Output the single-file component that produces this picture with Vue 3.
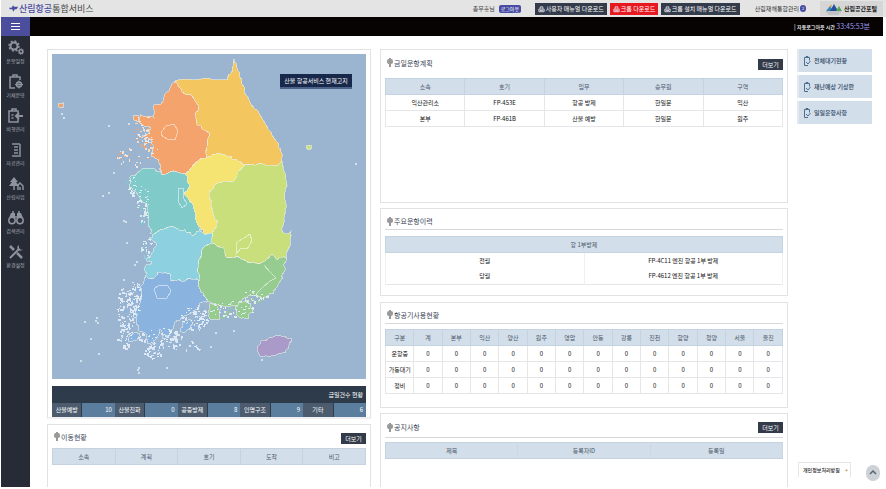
<script setup>
const menus = [
  { label: '운항일정', icon: 'gears' },
  { label: '기체운영', icon: 'clipboard' },
  { label: '비행관리', icon: 'export' },
  { label: '자료관리', icon: 'server' },
  { label: '산림사업', icon: 'tree' },
  { label: '검색관리', icon: 'binoculars' },
  { label: '환경설정', icon: 'tools' },
]

const downloads = [
  { label: '사용자 매뉴얼 다운로드', kind: 'wide' },
  { label: '크롬 다운로드', kind: 'red' },
  { label: '크롬 설치 매뉴얼 다운로드', kind: 'wider' },
]

const stats = [
  { label: '산불예방', value: 10 },
  { label: '산불진화', value: 0 },
  { label: '공중방제', value: 8 },
  { label: '인명구조', value: 9 },
  { label: '기타', value: 6 },
]

const moveCols = ['소속', '계획', '호기', '도착', '비고']
const planCols = ['소속', '호기', '임무', '승무원', '구역']
const plans = [
  ['익산관리소', 'FP-453E', '항공 방제', '한일문', '익산'],
  ['본부', 'FP-461B', '산불 예방', '한일문', '원주'],
]
const history = [
  ['전월', 'FP-4C11 엔진 항공 1부 방제'],
  ['당월', 'FP-4612 엔진 항공 1부 방제'],
]
const craftCols = ['구분', '계', '본부', '익산', '양산', '원주', '영암', '안동', '강릉', '진천', '함양', '청양', '서울', '울진']
const craftRows = ['운항중', '가동대기', '정비']
const noticeCols = ['제목', '등록자ID', '등록일']
const quick = ['전체대기현황', '재난예상 기상판', '일일운항사항']

// Repeatable pseudo-random value in 0..1
function hash(a, b) {
  const v = Math.sin(a * 12.9898 + b * 78.233) * 43758.5453
  return v - Math.floor(v)
}

// Splits each edge and nudges the middle points; an edge that two regions share gets the same points
function coast(text) {
  let out = text.split(' ').map((p) => p.split(',').map(Number))
  for (let pass = 0; pass < 2; pass++) {
    const next = []
    out.forEach((p, i) => {
      const q = out[(i + 1) % out.length]
      const len = Math.hypot(q[0] - p[0], q[1] - p[1])
      next.push(p)
      if (len > 4) {
        const s = p[0] + q[0]
        const t = p[1] + q[1]
        next.push([s / 2 + (hash(s, t) - 0.5) * 3, t / 2 + (hash(t, s) - 0.5) * 3])
      }
    })
    out = next
  }
  return out.map((p) => p.map((n) => n.toFixed(1)).join(',')).join(' ')
}

const regions = [
  { name: 'gangwon', fill: '#f4c65f', pts: '173,82 177,80 200,79 226,80 229,74 231,68 233,59 236,68 241,80 243,92 250,104 262,120 267,129 275,141 280,152 281,161 276,166 262,164 244,165 238,162 230,156 224,155 215,154 205,158 206,147 208,133 196,125 194,113 198,106 190,95 184,94 177,86' },
  { name: 'gyeonggi', fill: '#f4a36c', pts: '173,82 166,92 160,104 153,105 153,118 146,116 139,115 138,121 144,127 150,128 148,133 140,138 149,139 153,146 150,153 153,157 158,163 161,175 176,172 184,174 198,160 205,158 206,147 208,133 196,125 194,113 198,106 190,95 184,94 177,86' },
  { name: 'chungnam', fill: '#80cbc9', pts: '142,168 150,168 161,175 176,172 184,174 188,184 183,193 191,203 194,212 197,225 198,231 192,236 184,230 168,227 152,235 147,225 146,205 140,200 135,192 128,186 130,176' },
  { name: 'chungbuk', fill: '#f5e471', pts: '184,174 198,160 205,158 215,154 224,155 230,156 238,162 244,165 238,171 233,181 226,181 213,186 208,196 210,205 212,213 217,221 211,233 202,233 197,225 194,212 191,203 183,193 188,184' },
  { name: 'gyeongbuk', fill: '#c9df7c', pts: '244,165 262,164 276,166 281,161 285,180 284,200 283,218 282,232 284,234 290,231 289,243 285,258 275,259 270,255 262,262 250,263 240,259 226,258 222,248 211,243 211,233 217,221 212,213 210,205 208,196 213,186 226,181 233,181 238,171' },
  { name: 'jeonbuk', fill: '#8dd1e1', pts: '152,235 168,227 184,230 192,236 198,231 202,233 211,233 211,243 202,248 198,260 198,281 190,279 184,281 170,281 169,274 160,272 152,279 145,276 145,265 151,262 145,259 152,252 155,243 148,238' },
  { name: 'jeonnam', fill: '#8bb3df', pts: '145,276 152,279 160,272 169,274 170,281 184,281 190,279 198,281 202,293 206,302 198,305 192,313 181,317 174,322 169,333 165,338 161,336 159,329 156,338 151,346 146,343 146,335 138,331 135,324 136,308 140,300 139,288' },
  { name: 'gyeongnam', fill: '#97cc90', pts: '202,248 211,243 222,248 226,258 240,259 250,263 262,262 270,255 275,259 285,258 283,272 278,283 272,294 262,299 250,295 243,298 240,305 228,307 215,304 206,302 202,293 198,281 198,260' },
  { name: 'namhae', fill: '#97cc90', pts: '208,304 216,306 219,312 218,320 209,319 207,312' },
  { name: 'geoje', fill: '#97cc90', pts: '234,307 242,302 250,304 251,312 245,319 236,315' },
  { name: 'goheung', fill: '#8bb3df', pts: '181,324 187,320 191,322 190,328 184,332 179,330' },
  { name: 'jindo', fill: '#8bb3df', pts: '127,338 134,332 139,334 136,340 128,342' },
  { name: 'jeju', fill: '#a99aca', pts: '256,350 259,343 268,338 280,336 290,338 288,345 281,353 270,356 259,356' },
  { name: 'ulleung', fill: '#c9df7c', pts: '306,145 310,145 311,148 308,150 305,148' },
  { name: 'baengnyeong', fill: '#f4a36c', pts: '57,104 62,103 62,107 58,107' },
  { name: 'ganghwa', fill: '#f4a36c', pts: '132,116 137,115 138,122 133,120' },
].map((r) => ({ ...r, pts: r.pts.split(' ').length < 6 ? r.pts : coast(r.pts) }))

const lines = [
  '161,131 165,126 173,124 177,131 174,140 166,139 160,135',
  '177,188 182,188 182,197 186,204 181,208 177,201',
  '153,289 158,285 167,286 170,291 166,298 156,298',
  '236,242 243,238 249,234 251,241 246,249 240,248 235,254',
]

// Islet clusters: centre, spread, number of islets, light colour, land colour
const clusters = [
  [125, 308, 10, 22, 110, '#dbe7f5', '#8bb3df'],
  [134, 298, 7, 18, 90, '#dbe7f5', '#8bb3df'],
  [124, 336, 8, 14, 60, '#dbe7f5', '#8bb3df'],
  [159, 338, 22, 10, 130, '#dbe7f5', '#8bb3df'],
  [193, 317, 14, 14, 130, '#dbe7f5', '#8bb3df'],
  [150, 353, 9, 7, 34, '#dbe7f5', '#8bb3df'],
  [230, 309, 22, 10, 90, '#e0f0df', '#97cc90'],
  [252, 296, 14, 6, 55, '#e0f0df', '#97cc90'],
  [142, 203, 6, 20, 60, '#d6eef0', '#80cbc9'],
  [131, 183, 6, 12, 36, '#d6eef0', '#80cbc9'],
  [142, 129, 10, 15, 46, '#f8d9c4', '#f4a36c'],
  [150, 146, 7, 15, 30, '#f8d9c4', '#f4a36c'],
  [128, 158, 13, 10, 24, '#f8e3d6', '#f4a36c'],
  [146, 248, 6, 12, 24, '#d6eef0', '#8dd1e1'],
  [185, 349, 14, 10, 18, '#dbe7f5', '#8bb3df'],
]
const islets = clusters.flatMap(([cx, cy, rx, ry, n, light, base], c) =>
  Array.from({ length: n }, (_, i) => {
    const a = hash(i + 1, c + 3) * 6.283
    const r = Math.sqrt(hash(c + 7, i + 2))
    return {
      x: Math.round(cx + Math.cos(a) * r * rx),
      y: Math.round(cy + Math.sin(a) * r * ry),
      w: 1 + Math.floor(hash(i, c) * 2.3),
      h: 1 + Math.floor(hash(c, i) * 2.3),
      fill: hash(i + 5, c + 9) > 0.4 ? light : base,
    }
  }),
)
const singles = [[60, 113], [62, 117], [107, 125], [127, 123], [112, 172], [101, 195], [107, 192], [124, 221], [122, 220], [125, 242], [135, 261], [133, 264], [140, 247], [122, 279], [83, 321], [95, 317], [94, 320], [96, 322], [89, 338], [79, 360], [97, 353], [137, 367], [136, 369], [137, 372], [165, 367], [354, 163], [214, 332], [209, 346], [232, 330], [260, 359]]
</script>

<template>
  <div class="page">
    <header class="top">
      <h1 class="brand">
        <svg viewBox="0 0 12 10" aria-hidden="true"><path d="M0 4h3l2-3 1 2h5l-2 3H7L5 9 4 6H1z" fill="#4b4b9f" /></svg>
        <span><b>산림항공</b>통합서비스</span>
      </h1>
      <div class="user"><span>총무홍님</span><button class="logout">로그아웃</button></div>
      <div class="downloads">
        <a v-for="d in downloads" :key="d.label" href="#" :class="['dl', d.kind]">
          <svg viewBox="0 0 8 8" aria-hidden="true"><path d="M2.500 3V1h3v2M1 3.500h6v3H1zM2 5h4" fill="none" stroke="#e8e8ee" /></svg>{{ d.label }}
        </a>
      </div>
      <a href="#" class="fire">산림재해통합관리<i>2</i></a>
      <a href="#" class="portal">
        <svg viewBox="0 0 18 12" aria-hidden="true">
          <path d="M1 8l4-5 3 5z" fill="#3189b8" /><path d="M5 8l4-7 4 7z" fill="#284f9b" /><path d="M11 8l3-5 3 5z" fill="#55a85a" /><path d="M1 9h15M3 11h11" stroke="#a9adb5" /><circle cx="6" cy="3" r="1" fill="#e39a42" />
        </svg>산림공간포털
      </a>
    </header>

    <div class="bar">
      <button class="burger" aria-label="메뉴"><i /><i /><i /></button>
      <p class="timer">| <b>자동로그아웃 시간</b> <em>33:45:53분</em></p>
    </div>

    <div class="body">
      <nav class="side">
        <a v-for="m in menus" :key="m.label" href="#">
          <svg viewBox="0 0 16 16" fill="none" stroke="#8f939f" stroke-width="1.500" aria-hidden="true">
            <template v-if="m.icon === 'gears'">
              <circle cx="6" cy="6" r="3.500" stroke-width="2" /><circle cx="6" cy="6" r="5" stroke-dasharray="2 1.900" /><circle cx="13" cy="11.500" r="1.800" /><circle cx="13" cy="11.500" r="2.900" stroke-width="1" stroke-dasharray="1 1.200" />
            </template>
            <template v-else-if="m.icon === 'clipboard'">
              <path d="M7 14H2V3h10v3M5 3V1h4v2" /><circle cx="11" cy="10.500" r="2.500" /><path d="M11 6.500v8M7 10.500h8" stroke-width="1" />
            </template>
            <template v-else-if="m.icon === 'export'">
              <path d="M10 11v3H1V3h9v2M4 3V1h4v2M3.500 7h2M3.500 10h2" /><path d="M15 8H8M11 5L8 8l3 3" stroke-width="2" />
            </template>
            <template v-else-if="m.icon === 'server'">
              <path d="M4 2h8M12 2v11M6 5h4M6 8h4M6 11h4M4 14h9" />
            </template>
            <template v-else-if="m.icon === 'tree'">
              <path d="M6 1l4 5H8l3 4H1l3-4H2z" fill="#8f939f" stroke="none" /><path d="M6 9v5M10 14V9l2-2 3 3v4M12 14v-3" />
            </template>
            <template v-else-if="m.icon === 'binoculars'">
              <path d="M3 3h4v5H1zM9 3h4l2 5H9z" fill="#8f939f" stroke="none" /><circle cx="4" cy="10.500" r="3.200" /><circle cx="12" cy="10.500" r="3.200" /><path d="M7 7h2M4 2h2M10 2h2" />
            </template>
            <template v-else>
              <path d="M2 2l4 4M9 9l5 5" stroke-width="2.500" /><path d="M2 14l9-9" stroke-width="2" /><path d="M11 1a3 3 0 1 0 4 4l-2 1-2-2z" fill="#8f939f" stroke="none" />
            </template>
          </svg>
          <span>{{ m.label }}</span>
        </a>
      </nav>

      <main class="content">
        <div class="col">
          <section class="panel mapbox">
            <div class="map">
              <svg viewBox="51 54 314 325" role="img" aria-label="지역 지도" shape-rendering="crispEdges">
                <rect v-for="(s, i) in islets" :key="'i' + i" :x="s.x" :y="s.y" :width="s.w" :height="s.h" :fill="s.fill" />
                <rect v-for="(s, i) in singles" :key="'s' + i" :x="s[0]" :y="s[1]" width="2" height="2" fill="#d4e0ea" />
                <polygon v-for="r in regions" :key="r.name" :points="r.pts" :fill="r.fill" stroke="#e9efe4" stroke-opacity="0.6" />
                <polygon v-for="l in lines" :key="l" :points="l" fill="none" stroke="#fff" stroke-opacity="0.5" />
                <path d="M263 265l6 7 6 6-6 3-8 7-6 6" fill="none" stroke="#fff" stroke-opacity="0.5" />
                <rect v-for="(s, i) in islets.filter((_, n) => n % 3 === 0)" :key="'o' + i" :x="s.x" :y="s.y" :width="s.w" height="1" fill="#e3edf6" />
              </svg>
              <button class="maptip">산불 항공서비스 현재고지</button>
            </div>
            <div class="stats">
              <h2>금일건수 현황</h2>
              <dl>
                <div v-for="s in stats" :key="s.label"><dt>{{ s.label }}</dt><dd>{{ s.value }}</dd></div>
              </dl>
            </div>
          </section>

          <section class="panel grow move">
            <div class="head"><h2><i class="mark" />이동현황</h2><button class="more">더보기</button></div>
            <table><thead><tr><th v-for="c in moveCols" :key="c">{{ c }}</th></tr></thead></table>
          </section>
        </div>

        <div class="col">
          <section class="panel plan">
            <div class="head"><h2><i class="mark" />금일운항계획</h2><button class="more">더보기</button></div>
            <table>
              <thead><tr><th v-for="c in planCols" :key="c">{{ c }}</th></tr></thead>
              <tbody><tr v-for="(r, i) in plans" :key="i"><td v-for="(c, k) in r" :key="k">{{ c }}</td></tr></tbody>
            </table>
          </section>

          <section class="panel history">
            <div class="head lined"><h2><i class="mark" />주요운항이력</h2></div>
            <table>
              <thead><tr><th colspan="2">항 1부방제</th></tr></thead>
              <tbody><tr v-for="r in history" :key="r[0]"><td v-for="c in r" :key="c">{{ c }}</td></tr></tbody>
            </table>
          </section>

          <section class="panel craft">
            <div class="head lined"><h2><i class="mark" />항공기사용현황</h2></div>
            <table>
              <thead><tr><th v-for="c in craftCols" :key="c">{{ c }}</th></tr></thead>
              <tbody><tr v-for="r in craftRows" :key="r"><td>{{ r }}</td><td v-for="n in 13" :key="n">0</td></tr></tbody>
            </table>
          </section>

          <section class="panel grow notice">
            <div class="head lined"><h2><i class="mark" />공지사항</h2><button class="more">더보기</button></div>
            <table><thead><tr><th v-for="c in noticeCols" :key="c">{{ c }}</th></tr></thead></table>
          </section>
        </div>

        <aside class="quick">
          <a v-for="q in quick" :key="q" href="#">
            <svg viewBox="0 0 8 12" fill="none" stroke="#4f6e90" aria-hidden="true"><path d="M5 10.500H1.500v-8h5v3M3 2.500v-1h2v1" /><path d="M3 7l2 2 2.500-3" /></svg>{{ q }}
          </a>
        </aside>
      </main>
    </div>

    <a href="#" class="privacy">개인정보처리방침<b>+</b></a>
    <button class="totop" aria-label="맨 위로"><svg viewBox="0 0 14 14"><path d="M4 8l3-3 3 3" fill="none" stroke="#59626e" stroke-width="1.500" /></svg></button>
  </div>
</template>

<style>
body { margin: 0; background: #fff; }
</style>

<style scoped>
.page { box-sizing: border-box; min-height: 100vh; padding: 0 0 2px 1px; display: flex; flex-direction: column; font: 6px/8px "Noto Sans CJK KR", sans-serif; color: #222; }
.page * { box-sizing: border-box; }
h1, h2, p, dl, dd { margin: 0; }
button { font: inherit; border: 0; padding: 0; cursor: pointer; }
a { color: inherit; text-decoration: none; }

.top { height: 17px; background: #e4e4e4; display: flex; align-items: center; padding-right: 3px; }
.brand { display: flex; align-items: center; font-size: 9px; line-height: 14px; font-weight: 400; color: #444; margin-right: auto; padding-left: 8px; }
.brand svg { width: 10px; height: 9px; }
.brand b { color: #4b4b9f; font-weight: 500; }
.user { display: flex; align-items: center; gap: 4px; color: #444; }
.logout { width: 22px; height: 8px; border-radius: 2px; background: #474ba3; color: #fff; font-size: 5px; line-height: 8px; }
.downloads { display: flex; gap: 3px; margin: 1px 15px 0 14px; }
.dl { height: 12px; display: flex; align-items: center; gap: 1px; padding-left: 3px; background: #343b4b; color: #fff; white-space: nowrap; }
.dl svg { width: 7px; height: 7px; flex: none; }
.wide { width: 72px; }
.red { width: 48px; background: #e81820; }
.wider { width: 79px; }
.fire { display: flex; align-items: center; gap: 1px; font-size: 5px; font-weight: 500; color: #333; }
.fire { font-size: 6px; font-weight: 400; }
.fire i { width: 6px; height: 7px; border-radius: 3px; background: #474ba3; color: #fff; font-style: normal; font-size: 4px; line-height: 7px; text-align: center; }
.portal { margin-left: 14px; width: 63px; height: 15px; display: flex; align-items: center; gap: 1px; padding-left: 5px; background: #d6d6d6; color: #222; font-weight: 700; white-space: nowrap; }
.portal svg { width: 18px; height: 12px; }

.bar { height: 19px; background: #070303; display: flex; justify-content: space-between; align-items: center; margin-right: 3px; }
.burger { width: 29px; height: 19px; background: #4a4e9c; display: flex; flex-direction: column; align-items: center; justify-content: center; gap: 2px; }
.burger i { width: 9px; height: 1px; background: #fff; }
.timer { color: #fff; padding-right: 13px; }
.timer b { font-size: 5px; font-weight: 500; }
.timer em { font-style: normal; color: #9d98ee; font-size: 7px; }

.body { flex: 1; display: flex; }
.side { width: 29px; background: #272b35; padding-top: 4px; flex: none; }
.side a { height: 34px; display: flex; flex-direction: column; align-items: center; gap: 1px; color: #a6abb8; font-size: 5px; line-height: 8px; }
.side svg { width: 16px; height: 16px; }

.content { flex: 1; display: grid; grid-template-columns: 324fr 408fr 75fr; column-gap: 9px; padding: 13px 14px 0 17px; }
.col { display: flex; flex-direction: column; min-width: 0; }
.panel { border: 1px solid #e2e2e4; padding: 0 4px; }
.grow { flex: 1; border-bottom: 0; }
.mapbox { padding: 4px 4px 0; margin-bottom: 5px; border-bottom: 2px solid #f0f0f2; }
.map { position: relative; background: #9bb4cf; }
.map > svg { display: block; width: 100%; }
.maptip { position: absolute; top: 20px; right: 14px; width: 72px; height: 15px; background: #17284a; border-bottom: 2px solid #4c6288; color: #fff; white-space: nowrap; }
.stats { margin-top: 7px; background: #2e3b4b; }
.stats h2 { font-size: 6px; font-weight: 400; line-height: 17px; color: #fff; text-align: right; padding-right: 3px; }
.stats dl { display: grid; grid-template-columns: repeat(5, 1fr); }
.stats dl div { display: flex; height: 14px; line-height: 14px; color: #fff; }
.stats dt { flex: 1; background: #4c5c6e; text-align: center; margin-right: 1px; }
.stats dd { flex: 1; background: #5b7d9e; text-align: right; padding-right: 3px; }

.head { height: 28px; display: flex; align-items: center; justify-content: space-between; }
.head h2 { display: flex; align-items: center; gap: 1px; font-size: 7px; line-height: 10px; font-weight: 400; color: #3d4657; padding-left: 2px; }
.mark { position: relative; width: 6px; height: 9px; }
.mark::before { content: ""; position: absolute; left: 0; top: 1px; width: 6px; height: 5px; border-radius: 2px; background: #999; }
.mark::after { content: ""; position: absolute; left: 2px; top: 0; width: 2px; height: 9px; background: #999; }
.more { width: 25px; height: 11px; background: #333a49; color: #fff; line-height: 11px; }
.plan { height: 154px; margin-bottom: 5px; }
.plan .head h2 { padding-bottom: 3px; }
.history { height: 88px; margin-bottom: 6px; }
.history .head { height: 21px; padding-top: 4px; margin-bottom: 6px; }
.craft { height: 106px; margin-bottom: 5px; }
.craft .head { height: 21px; padding-top: 3px; margin-bottom: 5px; }
.notice .head { height: 24px; padding-top: 3px; margin-bottom: 4px; }
.lined { border-bottom: 1px solid #d8d8da; }
.move .head { height: 23px; padding-top: 3px; }
.move .head h2 { padding-bottom: 3px; }

table { width: 100%; table-layout: fixed; border-collapse: collapse; }
th { height: 16px; padding: 0; background: #d2dee9; border: 1px solid #c5d2df; font-weight: 400; color: #4c5869; }
td { height: 16px; padding: 0; border: 1px solid #e6e6e8; text-align: center; color: #111; white-space: nowrap; }
.history td { border-top: 0; border-bottom: 0; border-color: #f0f0f2; }
.history tbody { border-bottom: 1px solid #e6e6e8; }
.notice th { border-right-color: #cbd7e3; }

.quick { display: flex; flex-direction: column; gap: 3px; }
.quick a { height: 23px; display: flex; align-items: center; gap: 3px; padding-left: 4px; border-left: 2px solid #e2e9f0; background: #d2dee9; color: #2d4464; font-weight: 500; white-space: nowrap; }
.quick svg { width: 8px; height: 12px; flex: none; }

.privacy { position: fixed; right: 35px; bottom: 12px; width: 53px; height: 15px; line-height: 14px; padding-left: 4px; background: #fff; border: 1px solid #e6e6e6; border-width: 1px 1px 0 1px; font-size: 5px; font-weight: 500; white-space: nowrap; display: flex; justify-content: space-between; padding-right: 2px; }
.privacy b { color: #c08a2d; }
.totop { position: fixed; right: 6px; bottom: 8px; width: 14px; height: 16px; border-radius: 7px; background: #ccd2d6; display: flex; align-items: center; }
.totop svg { width: 14px; height: 14px; }
</style>
